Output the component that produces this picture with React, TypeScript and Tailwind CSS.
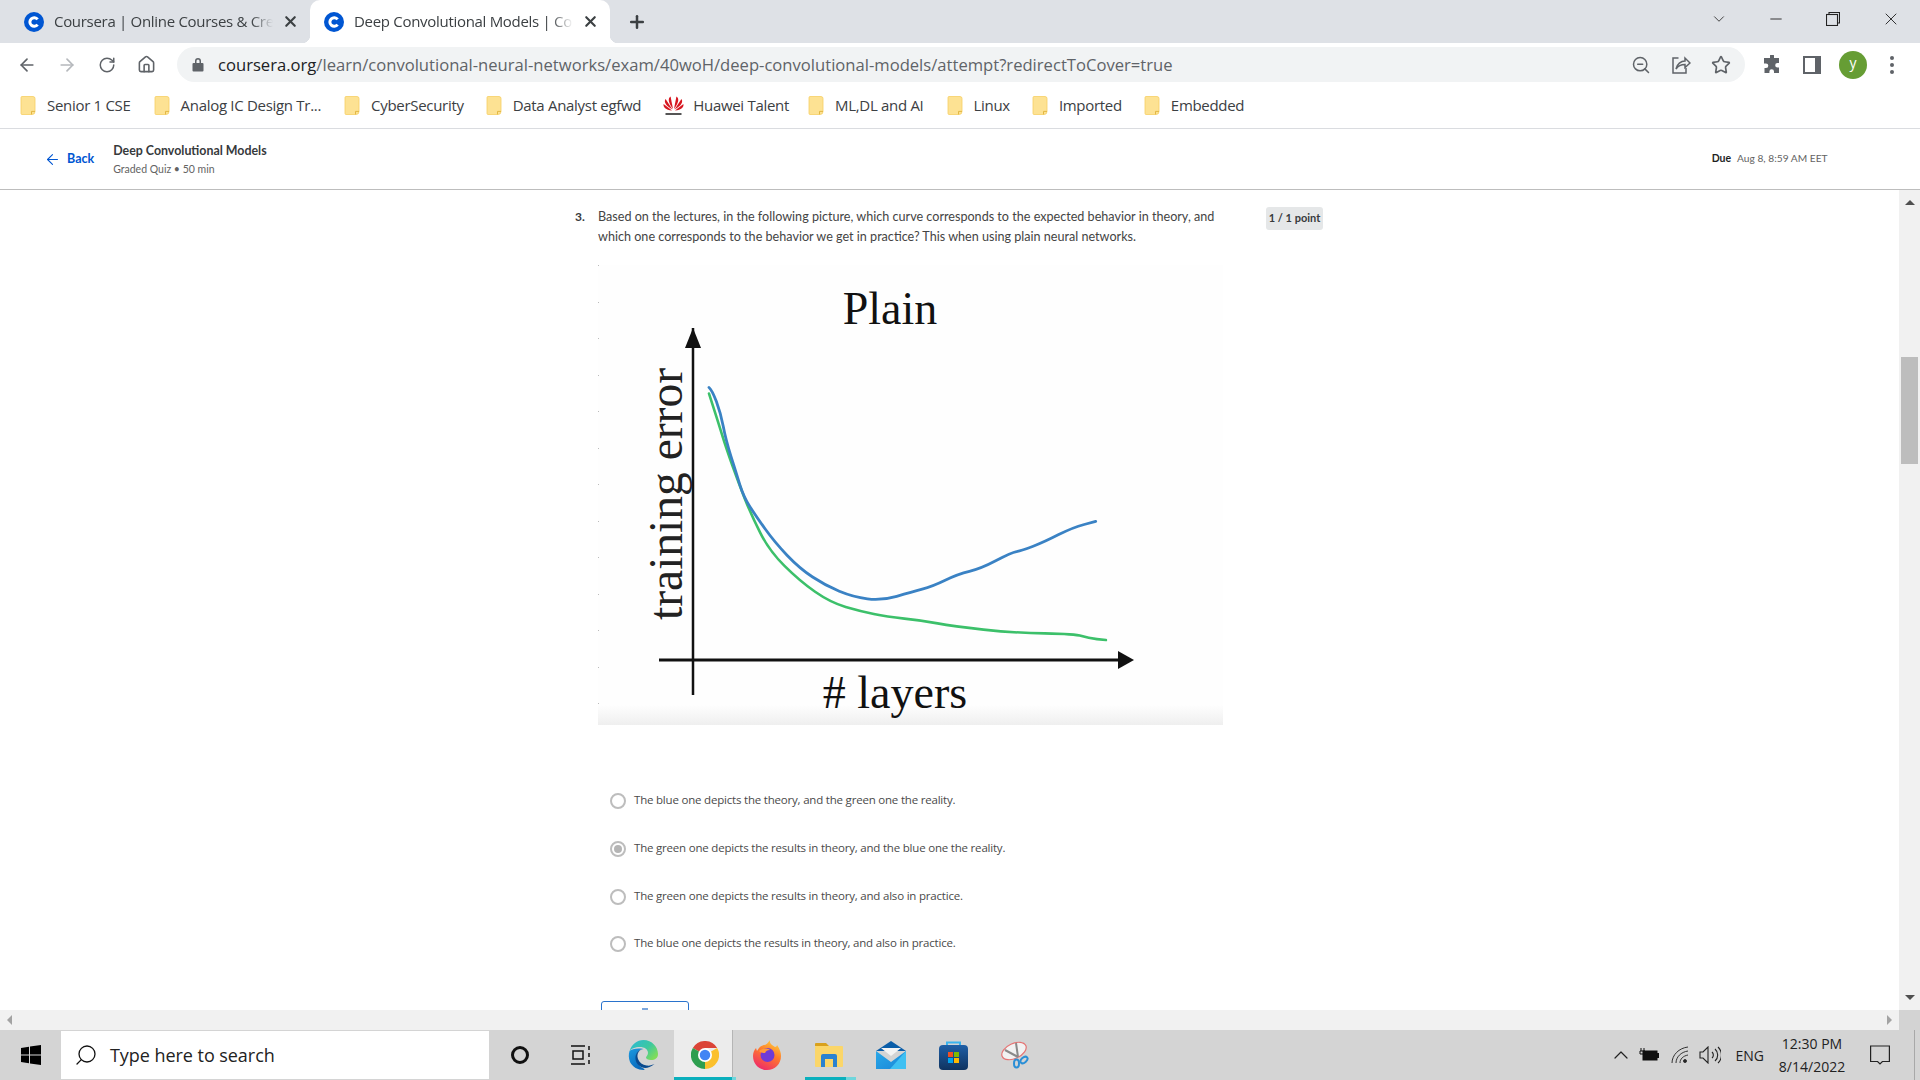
import React from "react";
import { ArrowLeft, ArrowRight, RotateCw, Home, ZoomOut, Star, ChevronDown, ChevronUp, X, Minus, Plus, Search } from "lucide-react";

const map = (a: number[][]) => a.map(([x, y]) => [x / 1.96 - 38, y / 2.8 - 75]);
const smooth = (raw: number[][]) => {
  const p = map(raw);
  let d = `M${p[0][0].toFixed(1)} ${p[0][1].toFixed(1)}`;
  for (let i = 1; i < p.length - 1; i++) {
    const mx = (p[i][0] + p[i + 1][0]) / 2;
    const my = (p[i][1] + p[i + 1][1]) / 2;
    d += ` Q${p[i][0].toFixed(1)} ${p[i][1].toFixed(1)} ${mx.toFixed(1)} ${my.toFixed(1)}`;
  }
  const l = p[p.length - 1];
  return d + ` L${l[0].toFixed(1)} ${l[1].toFixed(1)}`;
};
const blue = [[292,553],[298,560],[315,625],[325,700],[345,790],[360,860],[385,915],[420,985],[470,1060],[520,1107],[575,1140],[630,1150],[690,1125],[730,1110],[780,1075],[825,1060],[885,1015],[905,1010],[950,985],[1005,945],[1050,928]];
const green = [[292,570],[310,650],[325,720],[350,820],[375,910],[410,1010],[470,1095],[530,1155],[590,1180],[640,1195],[710,1205],[770,1222],[890,1240],[1010,1243],[1035,1255],[1070,1260]];

function Chart() {
  return (
    <svg width="625" height="460" viewBox="0 0 625 460" className="block">
      <defs>
        <linearGradient id="fade" x1="0" y1="0" x2="0" y2="1">
          <stop offset="0" stopColor="#fefefe" />
          <stop offset="1" stopColor="#efefef" />
        </linearGradient>
      </defs>
      <rect width="625" height="460" fill="#fefefe" />
      <rect y="440" width="625" height="20" fill="url(#fade)" />
      {[0,37,73,110,146,183,219,256,292,329,365,402,438].map((y) => <rect key={y} x="0" y={y} width="1" height="1" fill="#bbb" />)}
      <text x="292" y="59" fontFamily="'Liberation Serif', serif" fontSize="46" fill="#111" textAnchor="middle">Plain</text>
      <text x="297" y="443" fontFamily="'Liberation Serif', serif" fontSize="46" fill="#111" textAnchor="middle"># layers</text>
      <text transform="translate(84,229) rotate(-90)" x="0" y="0" fontFamily="'Liberation Serif', serif" fontSize="47.5" fill="#222" textAnchor="middle">training error</text>
      <line x1="95" y1="63" x2="95" y2="430" stroke="#111" strokeWidth="2.5" />
      <polygon points="95,63 87,83 103,83" fill="#111" />
      <line x1="61" y1="395" x2="520" y2="395" stroke="#111" strokeWidth="3" />
      <polygon points="536,395 520,386 520,404" fill="#111" />
      <path d={smooth(green)} fill="none" stroke="#3cc06a" strokeWidth="2.6" strokeLinecap="round" />
      <path d={smooth(blue)} fill="none" stroke="#3a82c4" strokeWidth="2.8" strokeLinecap="round" />
    </svg>
  );
}

function CIcon() {
  return (
    <svg width="20" height="20" viewBox="0 0 20 20" className="shrink-0">
      <circle cx="10" cy="10" r="10" fill="#0056d2" />
      <path d="M13.6 7.4A4.3 4.3 0 1 0 13.6 12.6" fill="none" stroke="#fff" strokeWidth="3" />
    </svg>
  );
}

function Tab({ title, active }: { title: string; active?: boolean }) {
  return (
    <div className={`relative flex h-[43px] w-[300px] shrink-0 items-center pl-[14px] pr-[11px] ${active ? "bg-white rounded-t-[10px]" : ""}`}>
      {active && <span className="absolute -left-2 bottom-0 h-2 w-2 bg-[radial-gradient(circle_at_0_0,transparent_8px,white_8.5px)]" />}
      {active && <span className="absolute -right-2 bottom-0 h-2 w-2 bg-[radial-gradient(circle_at_100%_0,transparent_8px,white_8.5px)]" />}
      <CIcon />
      <span className="ml-[10px] w-[219px] overflow-hidden whitespace-nowrap text-[15px] tracking-[-0.3px] text-[#3c4043] [mask-image:linear-gradient(to_right,black_90%,transparent)]">{title}</span>
      <X size={17} strokeWidth={3} className="ml-auto text-[#3c4043]" />
    </div>
  );
}

function Folder() {
  return (
    <svg width="16" height="19" viewBox="0 0 16 19" className="shrink-0">
      <path d="M1 1.5a1 1 0 0 1 1-1h11a2 2 0 0 1 2 2v13a3 3 0 0 1-3 3H2a1 1 0 0 1-1-1z" fill="#fde293" stroke="#f6cf63" strokeWidth="0.8" />
      <path d="M11.5 18.4v-3h3.5" fill="none" stroke="#e2b742" strokeWidth="1" />
    </svg>
  );
}

function Huawei() {
  return (
    <svg width="21" height="21" viewBox="0 0 21 21" className="shrink-0">
      <g fill="#d7161f">
        <path d="M10 14 7.6 1.5C5 3 4.600 7 10 14z" />
        <path d="M11 14 13.4 1.5C16 3 16.400 7 11 14z" />
        <path d="M9.400 14.600 2.600 4C.6 6.600 2.500 10.500 9.400 14.600z" />
        <path d="M11.600 14.600 18.400 4C20.400 6.600 18.500 10.500 11.600 14.600z" />
        <path d="M9 15.400 0.600 9C0 12 2.600 15 9 15.400z" />
        <path d="M12 15.400 20.400 9C21 12 18.400 15 12 15.400z" />
      </g>
      <rect x="2.5" y="18" width="16" height="2" fill="#555" />
    </svg>
  );
}

function Bookmark({ label, gap = 22, huawei }: { label: string; gap?: number; huawei?: boolean }) {
  return (
    <div className="flex items-center" style={{ marginRight: gap }}>
      {huawei ? <Huawei /> : <Folder />}
      <span className={`${huawei ? "ml-[9px]" : "ml-[11px]"} whitespace-nowrap text-[15px] tracking-[-0.3px] text-[#3c4043]`}>{label}</span>
    </div>
  );
}

function Option({ text, selected, last }: { text: string; selected?: boolean; last?: boolean }) {
  return (
    <div className={`flex items-center ${last ? "h-[46px]" : "h-[48px]"}`}>
      <span className="flex h-4 w-4 items-center justify-center rounded-full border-2 border-[#bdbdbd] bg-white">
        {selected && <span className="h-2 w-2 rounded-full bg-[#b5b5b5]" />}
      </span>
      <span className="ml-2 -translate-y-[1px] whitespace-nowrap font-['Open_Sans',sans-serif] text-[11.5px] tracking-[-0.2px] text-[#4a4a4a]">{text}</span>
    </div>
  );
}

function Windows() {
  return (
    <svg width="20" height="20" viewBox="0 0 20 20"><path d="M0 3l8-1.2V9.500H0zM9 1.600 20 0v9.500H9zM0 10.500h8v7.700L0 17zM9 10.500h11V20L9 18.400z" fill="#000" /></svg>
  );
}
function Edge() {
  return (
    <svg width="30" height="30" viewBox="0 0 30 30">
      <defs>
        <linearGradient id="e1" x1="0" y1="0" x2="1" y2="0.700"><stop offset="0" stopColor="#2cb8d8" /><stop offset="0.600" stopColor="#3cc8a0" /><stop offset="1" stopColor="#7fdc5a" /></linearGradient>
        <linearGradient id="e2" x1="0" y1="0" x2="0.500" y2="1"><stop offset="0" stopColor="#1d9ae0" /><stop offset="1" stopColor="#0a6bbd" /></linearGradient>
      </defs>
      <path d="M1.500 11C.5 14 .5 18 2 22c2.500 5 8 8 13.500 8 2 0 1-1-1-2-4-2-7-7-6-13 .5-3 3-6 7-6-6-1-12 0-14 2z" fill="url(#e2)" />
      <path d="M10 19c-2-6 2-10 6-10-5 0-9 4-8.500 10 .5 6 7 11 14 8 1-.5 4-2 5-3-2 1-5 2-8 1.500-4-.5-7-3-8.500-6.500z" fill="#0a4a8f" />
      <path d="M1.500 11C4 4 9 0 15.500 0 24 0 30 7 30 14c0 4-3 6-7 6-3 0-5-1-5-2.500 0-1 2-2 2-4.500 0-4-4-6-8-6-5 0-9 2-10.500 4z" fill="url(#e1)" />
    </svg>
  );
}
function Chrome() {
  return (
    <svg width="28" height="28" viewBox="0 0 48 48">
      <path d="M24 24 3.200 12A24 24 0 0 1 44.800 12H24z" fill="#db4437" />
      <path d="M24 24 44.800 12A24 24 0 0 1 24 48z" fill="#fbc02d" />
      <path d="M24 24 24 48A24 24 0 0 1 3.200 12z" fill="#2e9e4f" />
      <circle cx="24" cy="24" r="12" fill="#fff" />
      <circle cx="24" cy="24" r="9" fill="#4285f4" />
    </svg>
  );
}
function Firefox() {
  return (
    <svg width="28" height="30" viewBox="0 0 28 30">
      <defs>
        <linearGradient id="f1" x1="0.800" y1="0" x2="0.300" y2="1"><stop offset="0" stopColor="#ffd23a" /><stop offset="0.450" stopColor="#ff7a2c" /><stop offset="1" stopColor="#ee2a6a" /></linearGradient>
      </defs>
      <path d="M17 0c-1 3 2 5 5 7 1 0 2-1 2-2 3 4 4 8 4 11 0 8-6 14-14 14S0 24 0 16c0-3 1-6 3-8l1 3c2-3 3-5 7-6 2 0 4-2 6-5z" fill="url(#f1)" />
      <circle cx="14.500" cy="15" r="7" fill="#6f3bd6" />
      <path d="M6 11c3-3 8-3 11-1-3 0-4 1-5 3-3 0-5-.5-6-2z" fill="#ff9a3a" />
    </svg>
  );
}
function Explorer() {
  return (
    <svg width="28" height="24" viewBox="0 0 28 24">
      <path d="M1 0h10l3 3H0V1a1 1 0 0 1 1-1z" fill="#d9a11d" />
      <rect y="3" width="28" height="21" rx="1" fill="#fbd669" />
      <path d="M6 24V13a2 2 0 0 1 2-2h12a2 2 0 0 1 2 2v11h-4v-8h-8v8z" fill="#2b82d0" />
    </svg>
  );
}
function Mail() {
  return (
    <svg width="30" height="28" viewBox="0 0 30 28">
      <defs>
        <linearGradient id="m1" x1="0" y1="0" x2="1" y2="1"><stop offset="0" stopColor="#29a8e8" /><stop offset="1" stopColor="#1a86d8" /></linearGradient>
      </defs>
      <path d="M15 0 30 10 0 10z" fill="#0a5da8" />
      <path d="M5 7h20l-10 8z" fill="#f4f4f4" />
      <path d="M0 10l15 11 15-11v18H0z" fill="url(#m1)" />
      <path d="M30 10v18H14z" fill="#3fc0f2" />
    </svg>
  );
}
function Store() {
  return (
    <svg width="29" height="29" viewBox="0 0 29 29">
      <defs>
        <linearGradient id="s1" x1="0" y1="0" x2="0" y2="1"><stop offset="0" stopColor="#1f5fa6" /><stop offset="1" stopColor="#0f3360" /></linearGradient>
      </defs>
      <path d="M8 6V1.500h13V6" fill="none" stroke="#3ab4ee" strokeWidth="2" />
      <rect y="4" width="29" height="25" rx="4" fill="url(#s1)" />
      <rect x="9" y="11" width="5" height="5" fill="#f25022" />
      <rect x="15" y="11" width="5" height="5" fill="#7fba00" />
      <rect x="9" y="17" width="5" height="5" fill="#00a4ef" />
      <rect x="15" y="17" width="5" height="5" fill="#ffb900" />
    </svg>
  );
}
function Snip() {
  return (
    <svg width="28" height="28" viewBox="0 0 28 28">
      <ellipse cx="13" cy="10" rx="13" ry="7.500" transform="rotate(-25 13 10)" fill="#f2f2f2" stroke="#e57373" strokeWidth="1.200" />
      <path d="M4 9 17 16M15 2 17 16" stroke="#8a8a8a" strokeWidth="2" fill="none" />
      <ellipse cx="15.500" cy="22.500" rx="2.500" ry="4" fill="none" stroke="#2a8fd6" strokeWidth="2" />
      <ellipse cx="23" cy="19" rx="2.500" ry="4" transform="rotate(50 23 19)" fill="none" stroke="#2a8fd6" strokeWidth="2" />
    </svg>
  );
}

function TaskIcon({ children, active, running, className = "" }: { children: React.ReactNode; active?: boolean; running?: boolean; className?: string }) {
  return (
    <div className={`relative flex h-[50px] w-[62px] shrink-0 items-center justify-center ${active ? "bg-[linear-gradient(to_right,#ececec_58px,#b5b5b5_58px,#b5b5b5_59px,#d4d4d4_59px)]" : ""} ${className}`}>
      {children}
      {active && <span className="absolute bottom-0 left-0 h-[3px] w-[62px] bg-[linear-gradient(to_right,#0bb0bd_58px,#6fd6dc_58px)]" />}
      {running && <span className="absolute bottom-0 left-[7px] h-[3px] w-[51px] bg-[linear-gradient(to_right,#0bb0bd_41px,#6fd6dc_41px)]" />}
    </div>
  );
}

function ChevronUpTri() {
  return <div className="mt-[10px] h-0 w-0 border-x-[5px] border-b-[5px] border-x-transparent border-b-[#505050]" />;
}

export default function App() {
  return (
    <div className="flex h-[1080px] w-[1920px] flex-col overflow-hidden bg-white font-['Open_Sans',sans-serif]">
      {/* tab strip */}
      <div className="flex h-[43px] shrink-0 items-center bg-[#dee1e6] pl-[10px]">
        <Tab title="Coursera | Online Courses & Credentials" />
        <Tab title="Deep Convolutional Models | Coursera" active />
        <Plus size={20} strokeWidth={3} className="ml-[17px] shrink-0 text-[#3c4043]" />
        <ChevronDown size={18} strokeWidth={1.2} className="ml-[1063px] shrink-0 -translate-y-[3px] text-[#333]" />
        <div className="ml-[39px] flex w-[153px] shrink-0 -translate-y-[3px] items-center justify-between pr-[19px]">
          <Minus size={18} strokeWidth={1.2} className="text-[#222]" />
          <svg width="14" height="14" viewBox="0 0 14 14" fill="none" stroke="#222" strokeWidth="1.100"><rect x="0.500" y="2.500" width="11" height="11" /><path d="M3 2.500V.500h10.500V11h-2" /></svg>
          <X size={20} strokeWidth={1.1} className="text-[#222]" />
        </div>
      </div>
      {/* toolbar */}
      <div className="flex h-[43px] shrink-0 items-center bg-white">
        <div className="flex w-[177px] items-center pl-[17px] text-[#5f6368]">
          <ArrowLeft size={20} strokeWidth={2} />
          <ArrowRight size={20} strokeWidth={2} className="ml-5 text-[#b5b8bc]" />
          <RotateCw size={18} strokeWidth={2} className="ml-[21px]" />
          <Home size={19} strokeWidth={2} className="ml-[21px]" />
        </div>
        <div className="flex h-[35px] w-[1568px] items-center rounded-full bg-[#f1f3f4] pl-[15px] pr-[14px]">
          <svg width="12" height="15" viewBox="0 0 12 15" fill="#5f6368"><path d="M3 6V4a3 3 0 0 1 6 0v2h1.500a1 1 0 0 1 1 1v6.500a1 1 0 0 1-1 1h-9a1 1 0 0 1-1-1V7a1 1 0 0 1 1-1zM4.500 6h3V4a1.500 1.500 0 0 0-3 0z" /></svg>
          <span className="ml-[14px] translate-y-[1px] whitespace-nowrap text-[16.63px] text-[#5f6368]"><span className="text-[#202124]">coursera.org</span>/learn/convolutional-neural-networks/exam/40woH/deep-convolutional-models/attempt?redirectToCover=true</span>
          <ZoomOut size={20} strokeWidth={1.8} className="ml-auto text-[#5f6368]" />
          <svg width="20" height="20" viewBox="0 0 20 20" fill="none" stroke="#5f6368" strokeWidth="1.500" className="ml-5"><path d="M7.500 3H2v15h13v-5" /><path d="M5 14c1-5 5-8 9-8V3l5 5-5 4.500V9.500c-4 0-7 1.500-9 4.500z" /></svg>
          <Star size={20} strokeWidth={2} className="ml-5 text-[#5f6368]" />
        </div>
        <svg width="20" height="20" viewBox="0 0 20 20" fill="#5f6368" className="ml-[17px]"><path d="M8 1a2 2 0 0 1 4 0v2h5v5h-1.500a2.300 2.300 0 0 0 0 4.600H17V18h-5v-1.500a2.300 2.300 0 0 0-4.600 0V18H2.500v-5H4a2.300 2.300 0 0 0 0-4.600H2V3h6z" /></svg>
        <svg width="18" height="18" viewBox="0 0 18 18" className="ml-[21px]"><rect width="18" height="18" fill="#5f6368" /><rect x="2" y="2" width="10" height="14" fill="#fff" /></svg>
        <div className="ml-[18px] flex h-7 w-7 items-center justify-center rounded-full bg-[#669d34] pb-[4px] text-[14px] text-white">y</div>
        <svg width="4" height="18" viewBox="0 0 4 18" fill="#5f6368" className="ml-[23px]"><circle cx="2" cy="2" r="2" /><circle cx="2" cy="9" r="2" /><circle cx="2" cy="16" r="2" /></svg>
      </div>
      {/* bookmarks */}
      <div className="flex h-[43px] shrink-0 items-center border-b border-[#dadce0] bg-white pb-[3px] pl-[20px]">
        <Bookmark label="Senior 1 CSE" gap={23} />
        <Bookmark label="Analog IC Design Tr..." gap={23} />
        <Bookmark label="CyberSecurity" />
        <Bookmark label="Data Analyst egfwd" />
        <Bookmark label="Huawei Talent" gap={19} huawei />
        <Bookmark label="ML,DL and AI" gap={23} />
        <Bookmark label="Linux" />
        <Bookmark label="Imported" />
        <Bookmark label="Embedded" gap={0} />
      </div>
      {/* course header */}
      <div className="flex h-[61px] shrink-0 items-center border-b border-[#bdbdbd] bg-white pl-[44px] font-['Lato',sans-serif]">
        <ArrowLeft size={17} strokeWidth={1.5} className="text-[#0056d2]" />
        <span className="ml-[6px] text-[12.5px] font-bold text-[#0056d2]">Back</span>
        <div className="ml-[19px] flex translate-y-[1px] flex-col">
          <span className="text-[12.4px] leading-[18px] font-bold text-[#373a3c]">Deep Convolutional Models</span>
          <span className="text-[10.5px] leading-[18px] text-[#636363]">Graded Quiz • 50 min</span>
        </div>
        <span className="ml-[1445px] text-[10.5px] font-bold text-[#1f1f1f]">Due</span>
        <span className="ml-[6px] text-[10.2px] text-[#636363]">Aug 8, 8:59 AM EET</span>
      </div>
      {/* main */}
      <div className="flex min-h-0 flex-1 flex-col">
        <div className="flex h-[820px] shrink-0">
          <div className="min-w-0 flex-1 overflow-hidden pl-[575px] pt-[17px] font-['Lato',sans-serif]">
            <div className="flex h-[58px]">
              <span className="w-[23px] text-[12px] leading-[20px] font-bold text-[#373a3c]">3.</span>
              <p className="w-[668px] text-[12.6px] leading-[20px] text-[#444]">
                Based on the lectures, in the following picture, which curve corresponds to the expected behavior in theory, and<br />
                which one corresponds to the behavior we get in practice? This when using plain neural networks.
              </p>
              <span className="flex h-[23px] w-[57px] items-center justify-center rounded-[3px] bg-[#e5e7e8] text-[11px] font-bold text-[#373a3c]">1 / 1 point</span>
            </div>
            <div className="ml-[23px]"><Chart /></div>
            <div className="ml-[35px] mt-[52px] flex flex-col">
              <Option text="The blue one depicts the theory, and the green one the reality." />
              <Option text="The green one depicts the results in theory, and the blue one the reality." selected />
              <Option text="The green one depicts the results in theory, and also in practice." />
              <Option text="The blue one depicts the results in theory, and also in practice." last />
            </div>
            <div className="ml-[26px] mt-[34px] flex h-[30px] w-[88px] justify-center rounded-[3px] border border-[#2a73cc] pt-[6px]">
              <span className="h-[2px] w-[6px] bg-[#7aa6dd]" />
            </div>
          </div>
          <div className="flex w-[21px] shrink-0 flex-col items-center bg-[#f1f1f1]">
            <ChevronUpTri />
            <div className="mt-[152px] h-[107px] w-[17px] bg-[#bdbdbd]" />
            <div className="mb-[10px] mt-auto h-0 w-0 border-x-[5px] border-t-[5px] border-x-transparent border-t-[#505050]" />
          </div>
        </div>
        {/* horizontal scrollbar */}
        <div className="flex h-[20px] shrink-0 bg-[#f1f1f1]">
          <div className="flex flex-1 items-center justify-between px-[7px]">
            <span className="h-0 w-0 border-y-[5px] border-r-[5px] border-y-transparent border-r-[#a3a3a3]" />
            <span className="h-0 w-0 border-y-[5px] border-l-[5px] border-y-transparent border-l-[#a3a3a3]" />
          </div>
          <div className="w-[21px] bg-[#d3d3d3]" />
        </div>
        {/* taskbar */}
        <div className="flex h-[50px] shrink-0 items-center bg-[#d4d4d4] font-['Open_Sans',sans-serif]">
          <div className="flex w-[61px] justify-center"><Windows /></div>
          <div className="flex h-[48px] w-[428px] items-center bg-white pl-[13px] text-[#333]">
            <Search size={24} strokeWidth={1.3} className="-scale-x-100 text-[#111]" />
            <span className="ml-[12px] text-[18px] tracking-[-0.05px] text-[#222]">Type here to search</span>
          </div>
          <div className="flex w-[61px] justify-center"><span className="h-[18px] w-[18px] rounded-full border-[3px] border-[#111]" /></div>
          <div className="flex w-[61px] justify-center">
            <svg width="22" height="20" viewBox="0 0 22 20" fill="none" stroke="#111" strokeWidth="1.500"><path d="M1 1h14M1 19h14M3 6h10v8H3zM19 1v4M19 8v4M19 15v4" /></svg>
          </div>
          <TaskIcon className="ml-[1px]"><Edge /></TaskIcon>
          <TaskIcon active><Chrome /></TaskIcon>
          <TaskIcon><Firefox /></TaskIcon>
          <TaskIcon running><Explorer /></TaskIcon>
          <TaskIcon><Mail /></TaskIcon>
          <TaskIcon><Store /></TaskIcon>
          <TaskIcon><Snip /></TaskIcon>
          <div className="ml-auto flex h-full items-center pr-[5px] text-[#222]">
            <ChevronUp size={24} strokeWidth={1.2} />
            <svg width="20" height="14" viewBox="0 0 20 14" className="ml-[6px]"><rect x="4" y="3" width="14" height="9" fill="#111" stroke="#111" /><rect x="18" y="5" width="2" height="5" fill="#111" /><path d="M2 0v3M5 0v3M1 3h5v3H1z" fill="none" stroke="#111" /></svg>
            <svg width="18" height="18" viewBox="0 0 18 18" fill="none" stroke="#333" strokeWidth="1" className="ml-[12px]"><path d="M1 17C1 9 8 2 17 1M5 17c0-6 5-11 12-12M9 17c0-4 3-7 8-8" /><circle cx="14" cy="15" r="1.500" fill="#222" /></svg>
            <svg width="22" height="18" viewBox="0 0 22 18" fill="none" stroke="#222" strokeWidth="1.100" className="ml-[10px]"><path d="M1 6h3l5-5v16l-5-5H1zM13 6a4 4 0 0 1 0 6M16 3a8 8 0 0 1 0 12M19 1a11 11 0 0 1 0 16" /></svg>
            <span className="ml-[15px] text-[14px]">ENG</span>
            <div className="ml-[13px] flex w-[70px] flex-col items-center text-[14px] leading-[23px]">
              <span>12:30 PM</span>
              <span>8/14/2022</span>
            </div>
            <svg width="20" height="20" viewBox="0 0 20 20" fill="none" stroke="#222" strokeWidth="1.200" className="ml-[23px]"><path d="M.6 1h18.800v15.500h-7L10 19l-2.400-2.500H.6z" /></svg>
            <span className="ml-[24px] h-full w-px bg-[#a8a8a8]" />
          </div>
        </div>
      </div>
    </div>
  );
}
